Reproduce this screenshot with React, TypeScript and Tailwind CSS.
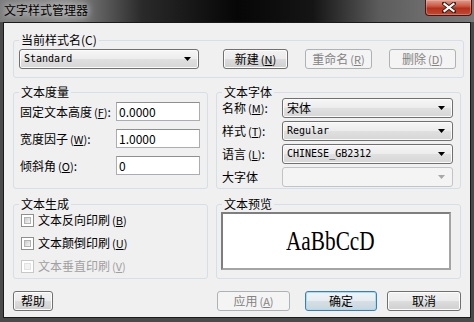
import type { ReactNode } from "react"

const cjk = "font-['Noto_Sans_CJK_SC','Noto_Sans',sans-serif]"
const mono = "font-['DejaVu_Sans_Mono','Liberation_Mono',monospace]"

function Key({ k }: { k: string }) {
  return (
    <span className="ml-[2px] text-[11px]">
      (<span className="underline underline-offset-1">{k}</span>)
    </span>
  )
}

function Group({ title, className, children }: { title: string; className?: string; children: ReactNode }) {
  return (
    <fieldset className={`border border-[#d5dfe5] rounded-[3px] ${className ?? ""}`}>
      <legend className="ml-[5px] px-[2px] text-[12px] leading-[12px] text-black">{title}</legend>
      {children}
    </fieldset>
  )
}

function Arrow({ disabled }: { disabled?: boolean }) {
  return (
    <svg width="7" height="4" viewBox="0 0 7 4" className="shrink-0">
      <path d="M0 0h7L3.5 4z" fill={disabled ? "#a8a8a8" : "#000"} />
    </svg>
  )
}

function Combo({ value, w, disabled, latin }: { value?: string; w: string; disabled?: boolean; latin?: boolean }) {
  return (
    <div
      className={`${w} h-[20px] flex items-center justify-between pl-[4px] pr-[7px] rounded-[3px] border ${
        disabled
          ? "border-[#c0c4c7] bg-[#f4f4f4]"
          : "border-[#707070] bg-[linear-gradient(180deg,#f6f6f6_0%,#ececec_50%,#e0e0e0_51%,#d6d6d6_100%)] shadow-[inset_0_0_0_1px_#fbfbfb]"
      }`}
    >
      <span className={latin ? `${mono} text-[10px] leading-[12px]` : "text-[12px] leading-[14px]"}>{value}</span>
      <Arrow disabled={disabled} />
    </div>
  )
}

function Btn({ children, w, disabled, primary }: { children: ReactNode; w: string; disabled?: boolean; primary?: boolean }) {
  const look = disabled
    ? "border-[#adb2b5] bg-[#f4f4f4] text-[#838383]"
    : primary
      ? "border-[#3c7fb1] bg-[linear-gradient(180deg,#f0f4f7_0%,#e6ecf0_50%,#d6dfe5_51%,#cad5dc_100%)] shadow-[inset_0_0_0_1px_#a8dbf8] text-black"
      : "border-[#707070] bg-[linear-gradient(180deg,#f2f2f2_0%,#ebebeb_50%,#dddddd_51%,#cfcfcf_100%)] shadow-[inset_0_0_0_1px_#fcfcfc] text-black"
  return (
    <div className={`${w} h-[20px] flex items-center justify-center rounded-[3px] border text-[12px] leading-[14px] ${look}`}>
      {children}
    </div>
  )
}

function Edit({ value }: { value: string }) {
  return (
    <div className="w-[84px] h-[19px] flex items-center pl-[2px] bg-white border border-[#abadb3] border-t-[#8e8f8f] text-[12px] leading-[14px]">
      {value}
    </div>
  )
}

function Check({ label, k, disabled }: { label: string; k: string; disabled?: boolean }) {
  return (
    <div className={`h-[14px] flex items-center gap-[4px] ${disabled ? "text-[#a0a0a0]" : "text-black"}`}>
      <div
        className={`w-[13px] h-[13px] p-[2px] border bg-white ${disabled ? "border-[#c8c8c8]" : "border-[#8f8f8f]"}`}
      >
        <div
          className={`w-full h-full border ${
            disabled
              ? "border-[#e2e2e2] bg-[#f2f2f2]"
              : "border-[#b3b3b3] bg-[linear-gradient(135deg,#cbcbcb_0%,#f6f6f6_100%)]"
          }`}
        />
      </div>
      <span className="text-[12px] leading-[14px]">
        {label}
        <Key k={k} />
      </span>
    </div>
  )
}

export default function App() {
  return (
    <div className={`w-[474px] h-[322px] bg-[#4a4a4a] flex flex-col ${cjk}`}>
      {/* title bar */}
      <div className="h-[22px] shrink-0 flex items-start justify-between bg-[linear-gradient(90deg,#7c7c7c_0%,#8a8a8a_14%,#2a2a2a_30%,#060606_50%,#151515_66%,#5c5c5c_80%,#6a6a6a_88%,#7a7a7a_100%)]">
        <div className="pl-[4px] pt-[4px] text-[12px] leading-[12px] text-black [text-shadow:0_0_6px_#d8d8d8,0_0_10px_#c8c8c8]">
          文字样式管理器
        </div>
        <div className="mr-[2px] w-[47px] h-[16px] flex items-center justify-center rounded-b-[4px] border border-t-0 border-[#4b140c] bg-[linear-gradient(180deg,#dc9f92_0%,#cd5a45_40%,#b3311c_55%,#c24a34_100%)] shadow-[inset_0_0_0_1px_rgba(255,200,190,0.35)]">
          <svg width="14" height="11" viewBox="0 0 14 11">
            <path d="M2 1.5l10 8M12 1.5l-10 8" stroke="#3b1a14" strokeWidth="4" strokeLinecap="square" />
            <path d="M2.5 2l9 7M11.5 2l-9 7" stroke="#fff" strokeWidth="2.2" strokeLinecap="square" />
          </svg>
        </div>
      </div>

      {/* client */}
      <div className="mx-[3px] h-[296px] border border-[#1a1a1a] bg-[#f0f0f0] px-[9px] pt-[11px] flex flex-col text-black">
        <Group title="当前样式名(C)">
          <div className="flex items-center pl-[5px] pr-[7px] pt-[3px] pb-[8px]">
            <Combo value="Standard" w="w-[180px]" latin />
            <div className="ml-[24px] flex gap-[17px]">
              <Btn w="w-[65px]">
                新建<Key k="N" />
              </Btn>
              <Btn w="w-[67px]" disabled>
                重命名<Key k="R" />
              </Btn>
              <Btn w="w-[67px]" disabled>
                删除<Key k="D" />
              </Btn>
            </div>
          </div>
        </Group>

        <div className="mt-[8px] flex gap-[8px] items-stretch">
          <Group title="文本度量" className="w-[195px] shrink-0">
            <div className="flex flex-col gap-[8px] pl-[6px] pt-[4px]">
              <div className="flex items-center">
                <span className="w-[96px] text-[12px] leading-[14px]">
                  固定文本高度<Key k="F" />:
                </span>
                <Edit value="0.0000" />
              </div>
              <div className="flex items-center">
                <span className="w-[96px] text-[12px] leading-[14px]">
                  宽度因子<Key k="W" />:
                </span>
                <Edit value="1.0000" />
              </div>
              <div className="flex items-center">
                <span className="w-[96px] text-[12px] leading-[14px]">
                  倾斜角<Key k="O" />:
                </span>
                <Edit value="0" />
              </div>
            </div>
          </Group>

          <Group title="文本字体" className="flex-1">
            <div className="flex flex-col gap-[3px] pl-[5px] pb-[1px]">
              <div className="flex items-center">
                <span className="w-[60px] text-[12px] leading-[14px]">
                  名称<Key k="M" />:
                </span>
                <Combo value="宋体" w="w-[171px]" />
              </div>
              <div className="flex items-center">
                <span className="w-[60px] text-[12px] leading-[14px]">
                  样式<Key k="T" />:
                </span>
                <Combo value="Regular" w="w-[171px]" latin />
              </div>
              <div className="flex items-center">
                <span className="w-[60px] text-[12px] leading-[14px]">
                  语言<Key k="L" />:
                </span>
                <Combo value="CHINESE_GB2312" w="w-[171px]" latin />
              </div>
              <div className="flex items-center">
                <span className="w-[60px] text-[12px] leading-[14px]">大字体</span>
                <Combo w="w-[171px]" disabled />
              </div>
            </div>
          </Group>
        </div>

        <div className="mt-[9px] flex gap-[8px] items-stretch">
          <Group title="文本生成" className="w-[195px] shrink-0">
            <div className="flex flex-col gap-[9px] pl-[7px] pt-[3px]">
              <Check label="文本反向印刷" k="B" />
              <Check label="文本颠倒印刷" k="U" />
              <Check label="文本垂直印刷" k="V" disabled />
            </div>
          </Group>

          <Group title="文本预览" className="flex-1">
            <div className="pl-[4px] pr-[9px] pt-[2px] pb-[8px]">
              <div className="h-[58px] flex items-center justify-center pr-[12px] bg-white border-2 border-[#7e7e7e] border-b-[#a4a4a4] border-r-[#a4a4a4]">
                <span className="inline-block scale-x-[0.76] font-['Liberation_Serif',serif] text-[28px] leading-[30px] text-black">
                  AaBbCcD
                </span>
              </div>
            </div>
          </Group>
        </div>

        <div className="mt-[12px] flex items-center">
          <Btn w="w-[40px]">帮助</Btn>
          <div className="flex-1" />
          <Btn w="w-[73px]" disabled>
            应用<Key k="A" />
          </Btn>
          <div className="ml-[15px]">
            <Btn w="w-[72px]" primary>
              确定
            </Btn>
          </div>
          <div className="ml-[10px]">
            <Btn w="w-[74px]">取消</Btn>
          </div>
        </div>
      </div>
    </div>
  )
}
